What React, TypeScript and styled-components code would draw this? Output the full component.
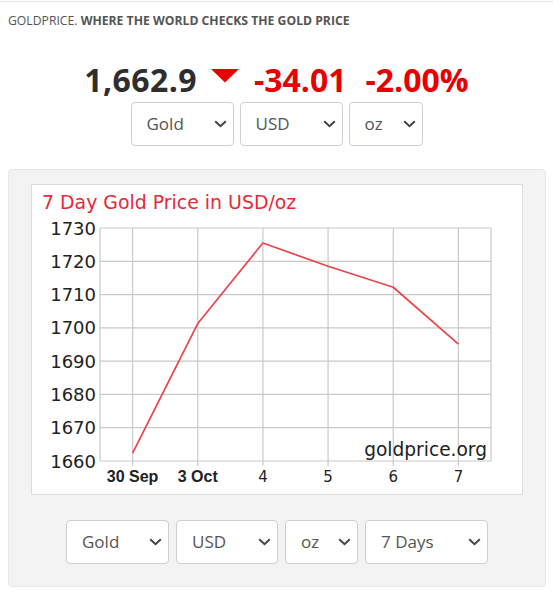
import React from "react";
import styled, { createGlobalStyle } from "styled-components";

const GlobalStyle = createGlobalStyle`
  html, body { margin: 0; padding: 0; background: #ffffff; }
  body { font-family: "Open Sans", "Liberation Sans", sans-serif; }
`;

const Page = styled.div`
  margin-top: 1px;
  border-top: 1px solid #e2e2e2;
  width: 553px;
  box-sizing: border-box;
`;

const Header = styled.div`
  padding: 10px 8px 0 8px;
  font-size: 12.2px;
  line-height: 18px;
  color: #555;
`;

const Brand = styled.span`
  font-weight: 400;
`;

const Tagline = styled.span`
  font-weight: 700;
`;

const PriceRow = styled.div`
  margin-top: 27.6px;
  display: flex;
  justify-content: center;
  align-items: flex-start;
  font-weight: 700;
  font-size: 32px;
  line-height: 44px;
`;

const Price = styled.span`
  color: #2e2e2e;
  letter-spacing: 0.4px;
`;

const Arrow = styled.svg`
  margin: 11px 15px 0 14px;
  display: block;
`;

const Change = styled.span<{ $gap?: number }>`
  color: #e60000;
  margin-left: ${(p) => p.$gap ?? 0}px;
`;

const SelectRow = styled.div<{ $gap: number }>`
  display: flex;
  justify-content: center;
  gap: ${(p) => p.$gap}px;
`;

const SelectBox = styled.div<{ $w: number }>`
  width: ${(p) => p.$w}px;
  height: 44px;
  box-sizing: border-box;
  border: 1px solid #cfcfcf;
  border-radius: 4px;
  background: #ffffff;
  display: flex;
  align-items: center;
  justify-content: space-between;
  padding: 0 6px 0 15px;
  font-size: 17px;
  color: #555;
  font-family: "Open Sans", sans-serif;
`;

const Chevron = styled.svg`
  display: block;
  flex-shrink: 0;
`;

const Panel = styled.div`
  margin: 23px 0 0 8px;
  width: 538px;
  box-sizing: border-box;
  background: #f3f3f3;
  border: 1px solid #e6e6e6;
  border-radius: 4px;
  padding: 14px 22px 22px 22px;
`;

const ChartBox = styled.div`
  width: 492px;
  height: 311px;
  box-sizing: border-box;
  background: #ffffff;
  border: 1px solid #dcdcdc;
  margin-bottom: 25px;
`;

const ChartSvg = styled.svg`
  display: block;
`;

const Select: React.FC<{ label: string; w: number }> = ({ label, w }) => (
  <SelectBox $w={w}>
    <span>{label}</span>
    <Chevron width="13" height="8" viewBox="0 0 13 8">
      <polyline points="1.2,1.2 6.5,6.2 11.8,1.2" fill="none" stroke="#444" strokeWidth="2" />
    </Chevron>
  </SelectBox>
);

const data = [1662.4, 1701.3, 1725.5, 1718.5, 1712.2, 1695.1];
const xLabels: { t: string; bold: boolean }[] = [
  { t: "30 Sep", bold: true },
  { t: "3 Oct", bold: true },
  { t: "4", bold: false },
  { t: "5", bold: false },
  { t: "6", bold: false },
  { t: "7", bold: false },
];

const X0 = 68;
const X1 = 459;
const Y0 = 43;
const Y1 = 276;
const band = (X1 - X0) / 6;
const step = (Y1 - Y0) / 7;
const xAt = (i: number) => X0 + band * (i + 0.5);
const yAt = (v: number) => Y1 - ((v - 1660) * (Y1 - Y0)) / 70;

const Chart: React.FC = () => {
  const hLines = Array.from({ length: 8 }, (_, i) => Y0 + i * step);
  const path = data.map((v, i) => `${i === 0 ? "M" : "L"}${xAt(i).toFixed(2)},${yAt(v).toFixed(2)}`).join(" ");
  return (
    <ChartSvg width="490" height="309" viewBox="0 0 490 309">
      <text x="10" y="24" fontFamily="'DejaVu Sans', Verdana, sans-serif" fontSize="18.9" fill="#e8293a">
        7 Day Gold Price in USD/oz
      </text>
      {hLines.map((y, i) => (
        <line key={"h" + i} x1={X0} x2={X1} y1={y} y2={y} stroke="#c9c9c9" strokeWidth="1.2" />
      ))}
      <line x1={X0} x2={X0} y1={Y0} y2={Y1} stroke="#c9c9c9" strokeWidth="1.2" />
      <line x1={X1} x2={X1} y1={Y0} y2={Y1} stroke="#c9c9c9" strokeWidth="1.2" />
      {xLabels.map((_, i) => (
        <line key={"v" + i} x1={xAt(i)} x2={xAt(i)} y1={Y0} y2={Y1 + 5} stroke="#c9c9c9" strokeWidth="1.2" />
      ))}
      {hLines.map((y, i) => (
        <text
          key={"yl" + i}
          x="64"
          y={y + 6.5}
          textAnchor="end"
          fontFamily="'DejaVu Sans', Verdana, sans-serif"
          fontSize="18"
          fill="#222"
        >
          {1730 - i * 10}
        </text>
      ))}
      {xLabels.map((l, i) => (
        <text
          key={"xl" + i}
          x={xAt(i)}
          y="297"
          textAnchor="middle"
          fontFamily={l.bold ? "'Liberation Sans', Arial, sans-serif" : "'DejaVu Sans', Verdana, sans-serif"}
          fontSize={l.bold ? 16 : 15}
          fontWeight={l.bold ? 700 : 400}
          fill="#222"
        >
          {l.t}
        </text>
      ))}
      <path d={path} fill="none" stroke="#ea4349" strokeWidth="1.7" strokeLinejoin="round" />
      <text x="455" y="271" textAnchor="end" fontFamily="'DejaVu Sans', Verdana, sans-serif" fontSize="18.6" fill="#222">
        goldprice.org
      </text>
    </ChartSvg>
  );
};

export default function App() {
  return (
    <>
      <GlobalStyle />
      <Page>
        <Header>
          <Brand>GOLDPRICE.</Brand> <Tagline>WHERE THE WORLD CHECKS THE GOLD PRICE</Tagline>
        </Header>
        <PriceRow>
          <Price>1,662.9</Price>
          <Arrow width="28" height="14" viewBox="0 0 28 14">
            <polygon points="0,0 28,0 14,13.5" fill="#e60000" />
          </Arrow>
          <Change>-34.01</Change>
          <Change $gap={19}>-2.00%</Change>
        </PriceRow>
        <SelectRow $gap={6}>
          <Select label="Gold" w={103} />
          <Select label="USD" w={103} />
          <Select label="oz" w={74} />
        </SelectRow>
        <Panel>
          <ChartBox>
            <Chart />
          </ChartBox>
          <SelectRow $gap={7}>
            <Select label="Gold" w={103} />
            <Select label="USD" w={102} />
            <Select label="oz" w={73} />
            <Select label="7 Days" w={123} />
          </SelectRow>
        </Panel>
      </Page>
    </>
  );
}
